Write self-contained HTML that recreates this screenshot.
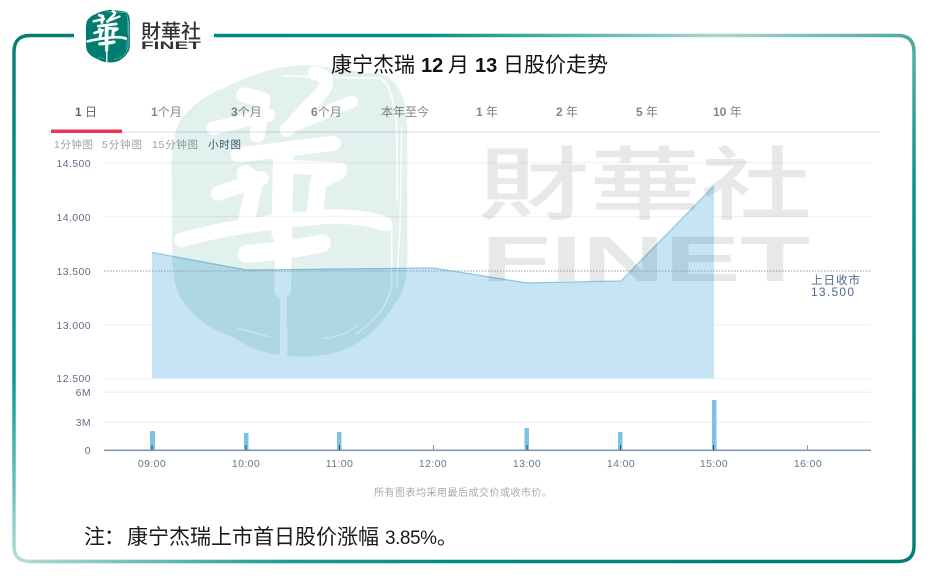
<!DOCTYPE html>
<html lang="zh"><head><meta charset="utf-8"><title>康宁杰瑞 12 月 13 日股价走势</title>
<style>
html,body{margin:0;padding:0;background:#fff;width:935px;height:578px;overflow:hidden}
svg{display:block}
text{font-family:"Liberation Sans","Noto Sans CJK SC",sans-serif}
.tab{font-size:12px;fill:#858585;font-weight:bold}
.sub{font-size:10.5px;fill:#a0a0a0}
.y{font-size:10.5px;fill:#5f6f85;text-anchor:end;letter-spacing:.4px}
.x{font-size:10.5px;fill:#66758a;text-anchor:middle;letter-spacing:.4px}
.cn{font-weight:normal}
</style></head><body>
<svg width="935" height="578" viewBox="0 0 935 578" xmlns="http://www.w3.org/2000/svg">
<defs>
<linearGradient id="gt" gradientUnits="userSpaceOnUse" x1="214" y1="0" x2="915" y2="0"><stop offset="0" stop-color="#008a80"/><stop offset=".3" stop-color="#049087"/><stop offset=".72" stop-color="#a8d6cf"/><stop offset="1" stop-color="#4aa79e"/></linearGradient>
<linearGradient id="gr" gradientUnits="userSpaceOnUse" x1="0" y1="36" x2="0" y2="562"><stop offset="0" stop-color="#5cb0a8"/><stop offset=".3" stop-color="#009088"/><stop offset="1" stop-color="#007e72"/></linearGradient>
<linearGradient id="gl" gradientUnits="userSpaceOnUse" x1="0" y1="36" x2="0" y2="562"><stop offset="0" stop-color="#007e72"/><stop offset=".65" stop-color="#019a90"/><stop offset="1" stop-color="#b5dcd6"/></linearGradient>
<linearGradient id="gb" gradientUnits="userSpaceOnUse" x1="14" y1="0" x2="915" y2="0"><stop offset="0" stop-color="#b5dcd6"/><stop offset=".3" stop-color="#1b9d92"/><stop offset=".5" stop-color="#008a7e"/><stop offset="1" stop-color="#007e72"/></linearGradient>
<path id="shape" d="M490 15C560 20 640 30 740 48C790 80 800 140 802 220L802 600C800 660 790 700 765 730C730 790 680 840 610 870C560 890 490 895 420 885C370 880 320 860 285 835C230 815 170 785 130 725C105 690 100 650 97 600L95 300C100 230 110 190 135 165C170 125 200 105 250 85C330 45 400 20 490 15Z"/>
<g id="strokes" fill="none" stroke-linecap="round" stroke-linejoin="round">
<path d="M220 205L385 165" stroke-width="40"/>
<path d="M312 105L368 118L352 225" stroke-width="46"/>
<path d="M525 40C570 50 575 75 510 135L440 210" stroke-width="42"/>
<path d="M440 205L635 125" stroke-width="38"/>
<path d="M295 285L580 250" stroke-width="46"/>
<path d="M235 400L365 355" stroke-width="44"/>
<path d="M315 340L345 360L318 490" stroke-width="50"/>
<path d="M430 300L425 520" stroke-width="62"/>
<path d="M440 320L600 328" stroke-width="42"/>
<path d="M595 335L535 365L525 455" stroke-width="50"/>
<path d="M125 540C230 510 380 485 560 470C640 468 700 478 735 492" stroke-width="44"/>
<path d="M320 582C400 575 480 565 545 550" stroke-width="54"/>
<path d="M432 500L428 690" stroke-width="50"/>
<path d="M430 680L431 880" stroke-width="22"/>
<path d="M430 48L720 55C750 70 765 130 770 200L772 420" stroke-width="5"/>
<path d="M785 200L780 500L770 680" stroke-width="4"/>
<path d="M755 500L755 680C745 730 710 780 650 820" stroke-width="5"/>
<path d="M550 835C590 835 630 815 655 795" stroke-width="4"/>
<path d="M295 805L385 830" stroke-width="4"/>
</g>
<mask id="wm" maskUnits="userSpaceOnUse" x="0" y="0" width="935" height="578">
<g transform="translate(140 60) scale(.3333)"><use href="#shape" fill="#fff"/><use href="#strokes" stroke="#000"/></g>
</mask>
</defs>

<!-- frame -->
<g fill="none" stroke-width="3.4">
<path d="M74 35.5H30Q14 35.5 14 52V300" stroke="url(#gl)"/>
<path d="M14 300V546Q14 561.5 30 561.5H400" stroke="url(#gl)"/>
<path d="M30 561.5H898" stroke="url(#gb)"/>
<path d="M214 35.5H898Q914 35.5 914 52" stroke="url(#gt)"/>
<path d="M914 52V546Q914 561.5 898 561.5" stroke="url(#gr)"/>
</g>

<!-- logo -->
<g transform="translate(80 9) scale(.0622 .06)"><use href="#shape" fill="#007d71"/><use href="#strokes" stroke="#fff"/></g>
<text x="141" y="38" font-size="19.5" textLength="60" lengthAdjust="spacingAndGlyphs" fill="#333" style="font-family:'Noto Sans CJK TC',sans-serif;font-weight:500">財華社</text>
<text x="141" y="49" font-size="11" textLength="60" lengthAdjust="spacingAndGlyphs" fill="#333" font-weight="bold">FINET</text>

<!-- title -->
<text y="72" font-size="21" fill="#111"><tspan x="331">康宁杰瑞</tspan><tspan x="421" font-size="20" font-weight="bold">12</tspan><tspan x="448">月</tspan><tspan x="475" font-size="20" font-weight="bold">13</tspan><tspan x="503">日股价走势</tspan></text>

<!-- tabs -->
<text class="tab" x="75" y="116" style="fill:#5c6470">1 <tspan class="cn">日</tspan></text>
<text class="tab" x="151" y="116">1<tspan class="cn">个月</tspan></text>
<text class="tab" x="231" y="116">3<tspan class="cn">个月</tspan></text>
<text class="tab" x="311" y="116">6<tspan class="cn">个月</tspan></text>
<text class="tab" x="381" y="116"><tspan class="cn">本年至今</tspan></text>
<text class="tab" x="476" y="116">1 <tspan class="cn">年</tspan></text>
<text class="tab" x="556" y="116">2 <tspan class="cn">年</tspan></text>
<text class="tab" x="636" y="116">5 <tspan class="cn">年</tspan></text>
<text class="tab" x="713" y="116">10 <tspan class="cn">年</tspan></text>
<rect x="51" y="131.500" width="829" height="1.300" fill="#dfe7ef"/>
<rect x="51" y="129.500" width="71" height="3.500" fill="#ea3350"/>
<text class="sub" x="54" y="148" textLength="39">1分钟图</text>
<text class="sub" x="102" y="148" textLength="40">5分钟图</text>
<text class="sub" x="152" y="148" textLength="46">15分钟图</text>
<text class="sub" x="208" y="148" textLength="33" style="fill:#3f5670">小时图</text>

<!-- grid -->
<g fill="#f1f2f4">
<rect x="104" y="162" width="767" height="1.200"/>
<rect x="104" y="216" width="767" height="1.200"/>
<rect x="104" y="324" width="767" height="1.200"/>
<rect x="104" y="378" width="767" height="1.200"/>
<rect x="104" y="391.500" width="767" height="1.500"/>
<rect x="104" y="421.500" width="767" height="1.500"/>
</g>
<g>
<text class="y" x="91" y="167">14.500</text>
<text class="y" x="91" y="221">14.000</text>
<text class="y" x="91" y="275">13.500</text>
<text class="y" x="91" y="329">13.000</text>
<text class="y" x="91" y="382">12.500</text>
<text class="y" x="91" y="396">6M</text>
<text class="y" x="91" y="426">3M</text>
<text class="y" x="91" y="454">0</text>
</g>

<!-- area -->
<path d="M152 252.500L246 270L340 269L433 268L527 283L621 281L714 186V378.500H152Z" fill="#c6e4f5"/>
<path d="M152 252.500L246 270L340 269L433 268L527 283L621 281L714 186" fill="none" stroke="#8fc6e0" stroke-width="1.200"/>

<!-- watermark -->
<g style="mix-blend-mode:multiply">
<rect x="160" y="55" width="260" height="310" fill="#e2f0ee" mask="url(#wm)"/>
<text x="478" y="213" font-size="80" textLength="334" lengthAdjust="spacingAndGlyphs" fill="#e8e8e8" style="font-family:'Noto Sans CJK TC',sans-serif;font-weight:500">財華社</text>
<text x="481" y="281" font-size="64" textLength="329" lengthAdjust="spacingAndGlyphs" fill="#e8e8e8" font-weight="bold">FINET</text>
</g>

<path d="M104 271H871" stroke="#8c99aa" stroke-width="1" stroke-dasharray="1.500 1.500" fill="none"/>
<text x="811" y="284" font-size="11.500" textLength="49" fill="#4f6b8b">上日收市</text>
<text x="811" y="296" font-size="12" textLength="43" fill="#4f6b8b">13.500</text>

<!-- volume -->
<g fill="#7cc3e6">
<rect x="150" y="431" width="5" height="19"/>
<rect x="244" y="433" width="4.500" height="17"/>
<rect x="337" y="432" width="4.500" height="18"/>
<rect x="524.500" y="428" width="4.500" height="22"/>
<rect x="618" y="432" width="4.500" height="18"/>
<rect x="712" y="400" width="4.500" height="50"/>
</g>
<rect x="104" y="449.500" width="767" height="1.600" fill="#8298b2"/>
<g fill="#2f4a66">
<rect x="151.500" y="445" width="1" height="5"/>
<rect x="245.500" y="445" width="1" height="5"/>
<rect x="339" y="445" width="1" height="5"/>
<rect x="526.500" y="445" width="1" height="5"/>
<rect x="620" y="445" width="1" height="5"/>
<rect x="713" y="445" width="1" height="5"/>
</g>
<g fill="#8298b2">
<rect x="433" y="445" width="1" height="5"/>
<rect x="807" y="445" width="1" height="5"/>
</g>
<text class="x" x="152" y="467">09:00</text>
<text class="x" x="246" y="467">10:00</text>
<text class="x" x="339.500" y="467">11:00</text>
<text class="x" x="433" y="467">12:00</text>
<text class="x" x="527" y="467">13:00</text>
<text class="x" x="621" y="467">14:00</text>
<text class="x" x="714" y="467">15:00</text>
<text class="x" x="808" y="467">16:00</text>

<text x="374" y="496" font-size="10" textLength="178" fill="#a8a8a8">所有图表均采用最后成交价或收市价。</text>
<text y="544" fill="#1a1a1a" font-size="21"><tspan x="84">注</tspan><tspan x="104">：</tspan><tspan x="127">康宁杰瑞上市首日股价涨幅</tspan></text>
<text x="385" y="544" fill="#1a1a1a" font-size="19" textLength="52">3.85%</text>
<text x="437" y="544" fill="#1a1a1a" font-size="20">。</text>
</svg>
</body></html>
